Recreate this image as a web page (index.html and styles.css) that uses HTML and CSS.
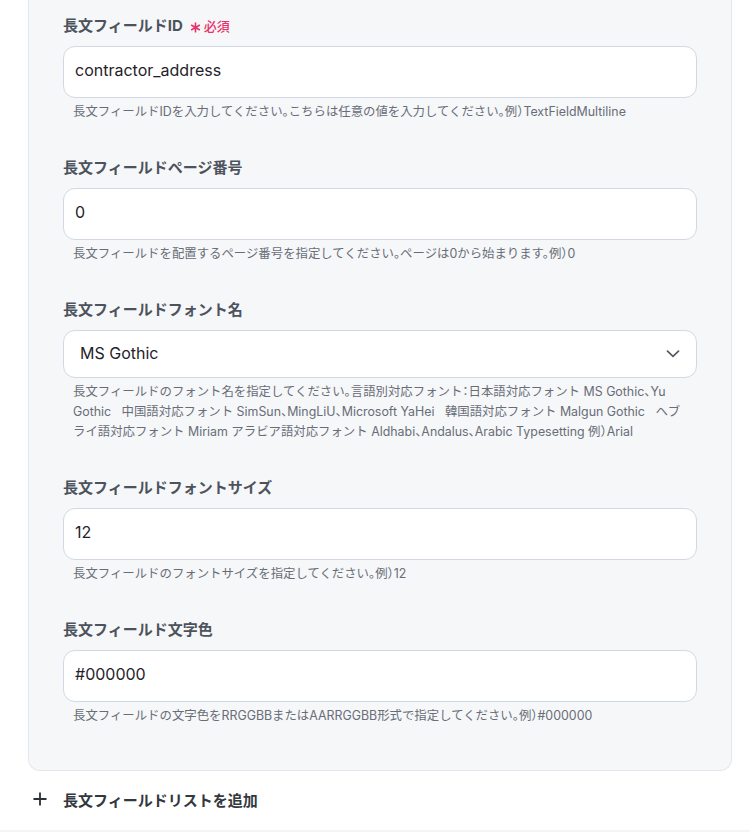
FILE: index.html
```html
<!DOCTYPE html>
<html lang="ja">
<head>
<meta charset="utf-8">
<title>長文フィールド</title>
<link rel="stylesheet" href="styles.css">
</head>
<body>
<div class="panel">
  <div class="field">
    <div class="label">長文フィールドID<span class="req"><svg class="ast" width="11" height="11" viewBox="0 0 11 11"><path d="M5.5 0.5V10.5M1.17 3L9.83 8M1.17 8L9.83 3" stroke="#e8336a" stroke-width="1.6" fill="none"/></svg>必須</span></div>
    <div class="input">contractor_address</div>
    <div class="help">長文フィールドIDを入力してください。こちらは任意の値を入力してください。例）TextFieldMultiline</div>
  </div>
  <div class="field">
    <div class="label">長文フィールドページ番号</div>
    <div class="input">0</div>
    <div class="help">長文フィールドを配置するページ番号を指定してください。ページは0から始まります。例）0</div>
  </div>
  <div class="field">
    <div class="label">長文フィールドフォント名</div>
    <div class="select">
      <span>MS Gothic</span>
      <svg class="chev" width="14" height="8" viewBox="0 0 14 8"><polyline points="1.5,1.2 7,6.4 12.5,1.2" fill="none" stroke="#555b66" stroke-width="1.7" stroke-linecap="round" stroke-linejoin="round"/></svg>
    </div>
    <div class="help">長文フィールドのフォント名を指定してください。言語別対応フォント：日本語対応フォント MS Gothic、Yu Gothic&nbsp;&nbsp; 中国語対応フォント SimSun、MingLiU、Microsoft YaHei&nbsp;&nbsp; 韓国語対応フォント Malgun Gothic&nbsp;&nbsp; ヘブ<br>ライ語対応フォント Miriam アラビア語対応フォント Aldhabi、Andalus、Arabic Typesetting 例）Arial</div>
  </div>
  <div class="field">
    <div class="label">長文フィールドフォントサイズ</div>
    <div class="input">12</div>
    <div class="help">長文フィールドのフォントサイズを指定してください。例）12</div>
  </div>
  <div class="field">
    <div class="label">長文フィールド文字色</div>
    <div class="input">#000000</div>
    <div class="help">長文フィールドの文字色をRRGGBBまたはAARRGGBB形式で指定してください。例）#000000</div>
  </div>
</div>
<div class="add">
  <svg class="plus" width="14" height="14" viewBox="0 0 14 14"><path d="M7 0.5V13.5M0.5 7H13.5" stroke="#2b2f36" stroke-width="1.8" fill="none"/></svg>
  <span>長文フィールドリストを追加</span>
</div>
<div class="strip"></div>
</body>
</html>
```
FILE: styles.css
```css
html, body {
  margin: 0;
  padding: 0;
  background: #ffffff;
}
body {
  font-family: Inter, "Noto Sans CJK JP", sans-serif;
  width: 750px;
  overflow: hidden;
}
.panel {
  margin-left: 28px;
  width: 704px;
  box-sizing: border-box;
  background: #f6f7f9;
  border: 1px solid #e3e6eb;
  border-top: none;
  border-radius: 0 0 12px 12px;
  padding: 16px 34px 44px 34px;
  display: flex;
  flex-direction: column;
  gap: 36px;
}
.field {
  display: flex;
  flex-direction: column;
}
.label {
  font-size: 15px;
  font-weight: 700;
  line-height: 20px;
  color: #4d535d;
  margin-bottom: 10px;
  display: flex;
  align-items: center;
}
.req {
  color: #e8336a;
  font-size: 13px;
  font-weight: 500;
  margin-left: 7px;
  display: flex;
  align-items: center;
  gap: 3px;
}
.ast {
  position: relative;
  top: 1px;
}
.input, .select {
  box-sizing: border-box;
  height: 52px;
  background: #ffffff;
  border: 1px solid #d2d8e1;
  border-radius: 12px;
  padding: 0 12px 0 11px;
  font-size: 16px;
  color: #1f2329;
  display: flex;
  align-items: center;
  padding-bottom: 4px;
}
.select {
  height: 48px;
  padding: 0 16px 0 16px;
  padding-bottom: 2px;
  justify-content: space-between;
}
.chev {
  margin-top: 2px;
}
.help {
  margin-top: 4px;
  padding-left: 10px;
  font-size: 12.4px;
  line-height: 20px;
  color: #686d77;
  font-feature-settings: "halt";
}
.add {
  margin: 18px 0 21px 33px;
  height: 20px;
  display: flex;
  align-items: center;
  gap: 16px;
  font-size: 15px;
  font-weight: 700;
  color: #33373e;
}
.strip {
  height: 10px;
  background: #f4f5f7;
}
```
